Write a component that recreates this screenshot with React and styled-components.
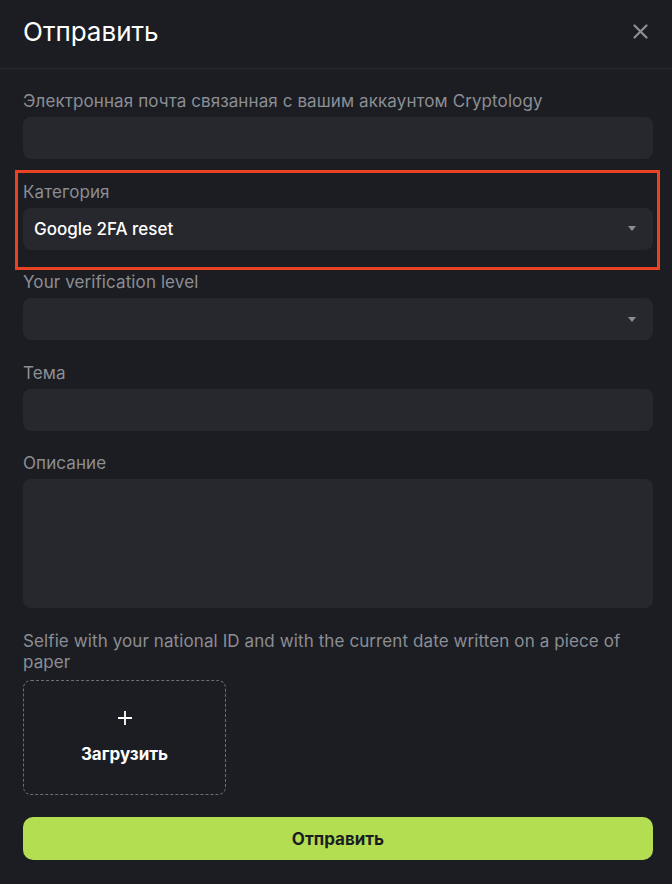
import React from 'react';
import styled, { createGlobalStyle } from 'styled-components';

const GlobalStyle = createGlobalStyle`
  html, body {
    margin: 0;
    padding: 0;
    background: #1c1d22;
  }
  body {
    font-family: Inter, "Noto Sans", sans-serif;
    -webkit-font-smoothing: antialiased;
  }
  * {
    box-sizing: border-box;
  }
`;

const Modal = styled.div`
  width: 672px;
  min-height: 884px;
  background: #1c1d22;
  display: flex;
  flex-direction: column;
`;

const Header = styled.div`
  height: 69px;
  display: flex;
  align-items: center;
  justify-content: space-between;
  padding: 0 22px 6px 23px;
  border-bottom: 1px solid #2a2b30;
`;

const Title = styled.h1`
  margin: 0;
  font-size: 26px;
  font-weight: 400;
  color: #ffffff;
`;

const CloseButton = styled.button`
  width: 20px;
  height: 20px;
  padding: 0;
  border: none;
  background: none;
  display: flex;
  align-items: center;
  justify-content: center;
  color: #8b8e94;
  cursor: pointer;
`;

const Form = styled.form`
  display: flex;
  flex-direction: column;
  padding: 22px 19px 24px 23px;
`;

const Field = styled.div`
  position: relative;
  display: flex;
  flex-direction: column;
  margin-bottom: 22.5px;

  ${({ $highlight }) =>
    $highlight &&
    `
    &::before {
      content: '';
      position: absolute;
      top: -12px;
      left: -8px;
      right: -7px;
      bottom: -20px;
      border: 3px solid #ea4323;
      pointer-events: none;
    }
  `}
`;

const Label = styled.label`
  font-size: 17px;
  letter-spacing: 0.1px;
  line-height: ${({ $lh }) => $lh || 20}px;
  color: #8b8e94;
  margin-bottom: ${({ $gap }) => $gap || 6}px;
`;

const Input = styled.input`
  display: block;
  height: 42px;
  width: 100%;
  border: none;
  border-radius: 8px;
  background: #27282d;
  padding: 0 11px;
  font-family: inherit;
  font-size: 17px;
  color: #ffffff;
  outline: none;
`;

const SelectBox = styled.div`
  height: 42px;
  border-radius: 8px;
  background: #27282d;
  display: flex;
  align-items: center;
  justify-content: space-between;
  padding: 0 17px 0 11px;
  font-size: 17px;
  font-weight: 500;
  color: #ffffff;
`;

const Caret = styled.span`
  width: 0;
  height: 0;
  border-left: 4px solid transparent;
  border-right: 4px solid transparent;
  border-top: 5px solid #8b8e94;
`;

const TextArea = styled.textarea`
  display: block;
  height: 129px;
  width: 100%;
  border: none;
  border-radius: 8px;
  background: #27282d;
  resize: none;
  padding: 11px;
  font-family: inherit;
  font-size: 17px;
  color: #ffffff;
  outline: none;
`;

const Upload = styled.div`
  width: 203px;
  height: 115px;
  border: 1px dashed #6c6f75;
  border-radius: 8px;
  display: flex;
  flex-direction: column;
  align-items: center;
  justify-content: center;
  gap: 18px;
  color: #ffffff;
  cursor: pointer;
`;

const UploadText = styled.span`
  font-size: 17px;
  font-weight: 700;
  line-height: 20px;
`;

const SubmitButton = styled.button`
  height: 43px;
  width: 100%;
  border: none;
  border-radius: 10px;
  background: #b4de52;
  color: #1c1d22;
  font-family: inherit;
  font-size: 17px;
  font-weight: 700;
  cursor: pointer;
`;

const CloseIcon = () => (
  <svg width="15" height="15" viewBox="0 0 15 15" fill="none">
    <path d="M1.5 1.5L13.5 13.5M13.5 1.5L1.5 13.5" stroke="currentColor" strokeWidth="2.2" strokeLinecap="round" />
  </svg>
);

const PlusIcon = () => (
  <svg width="16" height="16" viewBox="0 0 16 16" fill="none">
    <path d="M8 1V15M1 8H15" stroke="currentColor" strokeWidth="1.8" />
  </svg>
);

const App = () => {
  return (
    <Modal>
      <GlobalStyle />
      <Header>
        <Title>Отправить</Title>
        <CloseButton type="button" aria-label="Закрыть">
          <CloseIcon />
        </CloseButton>
      </Header>
      <Form onSubmit={(e) => e.preventDefault()}>
        <Field>
          <Label>Электронная почта связанная с вашим аккаунтом Cryptology</Label>
          <Input type="email" />
        </Field>
        <Field $highlight>
          <Label>Категория</Label>
          <SelectBox>
            Google 2FA reset
            <Caret />
          </SelectBox>
        </Field>
        <Field>
          <Label>Your verification level</Label>
          <SelectBox>
            <span />
            <Caret />
          </SelectBox>
        </Field>
        <Field>
          <Label>Тема</Label>
          <Input type="text" />
        </Field>
        <Field>
          <Label>Описание</Label>
          <TextArea />
        </Field>
        <Field>
          <Label $lh={21} $gap={7}>
            Selfie with your national ID and with the current date written on a piece of paper
          </Label>
          <Upload>
            <PlusIcon />
            <UploadText>Загрузить</UploadText>
          </Upload>
        </Field>
        <SubmitButton type="submit">Отправить</SubmitButton>
      </Form>
    </Modal>
  );
};

export default App;
